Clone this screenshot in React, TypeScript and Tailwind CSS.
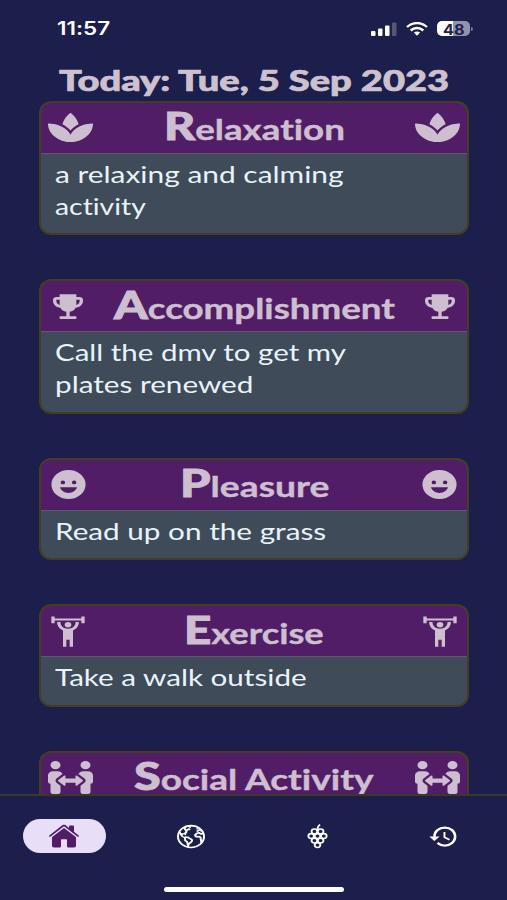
import { useLayoutEffect, useRef } from "react";
import type { ReactNode } from "react";
import { FaPeopleArrows, FaSpa } from "react-icons/fa";
import { IoEarthOutline, IoHome } from "react-icons/io5";
import { MdEmojiEvents, MdHistory } from "react-icons/md";

// Stretches one line of text to a given width
function Line({ width, className = "", children }: { width: number; className?: string; children: ReactNode }) {
  const ref = useRef<HTMLSpanElement>(null);

  useLayoutEffect(() => {
    const el = ref.current;
    if (el) el.style.transform = `scaleX(${width / el.offsetWidth})`;
  }, [width]);

  return (
    <span className="block" style={{ width }}>
      <span ref={ref} className={`inline-block origin-left whitespace-nowrap ${className}`}>
        {children}
      </span>
    </span>
  );
}

const Spa = () => <FaSpa preserveAspectRatio="none" className="h-[33px] w-[45px]" />;
const Trophy = () => <MdEmojiEvents preserveAspectRatio="none" className="h-[33px] w-10" />;
const People = () => <FaPeopleArrows preserveAspectRatio="none" className="h-[33px] w-[45px]" />;

const Smiley = () => (
  <svg viewBox="0 0 24 24" preserveAspectRatio="none" className="h-[35px] w-[41px]" fill="currentColor">
    <path
      fillRule="evenodd"
      d="M12 2a10 10 0 1 0 0 20 10 10 0 0 0 0-20ZM8.700 9.300a1.300 1.300 0 1 1 0 2.600 1.300 1.300 0 0 1 0-2.600Zm6.600 0a1.300 1.300 0 1 1 0 2.600 1.300 1.300 0 0 1 0-2.600ZM7 13.900h10c-.6 2.300-2.600 3.900-5 3.900S7.600 16.200 7 13.900Z"
    />
  </svg>
);

const Lifter = () => (
  <svg viewBox="0 0 24 24" preserveAspectRatio="none" className="h-[33px] w-10" fill="currentColor">
    <circle cx="12" cy="7" r="2" />
    <path d="M22 1v5h-2V4H4v2H2V1h2v1.500h16V1h2ZM15 11.260V23h-2v-5h-2v5H9V11.260C6.930 10.170 5.500 8 5.500 5.500V5h2v.5C7.500 8 9.500 10 12 10s4.500-2 4.500-4.500V5h2v.5c0 2.500-1.430 4.670-3.500 5.760Z" />
  </svg>
);

const Grapes = () => (
  <svg viewBox="0 0 24 24" preserveAspectRatio="none" className="h-[26px] w-[31px]" fill="none" stroke="currentColor" strokeWidth="1.400">
    <path d="M12 6c0-2 .5-3.500 2-4.500" />
    <circle cx="9.600" cy="7.800" r="2.200" />
    <circle cx="14.400" cy="7.800" r="2.200" />
    <circle cx="7.100" cy="12" r="2.200" />
    <circle cx="12" cy="12" r="2.200" />
    <circle cx="16.900" cy="12" r="2.200" />
    <circle cx="9.600" cy="16.200" r="2.200" />
    <circle cx="14.400" cy="16.200" r="2.200" />
    <circle cx="12" cy="20.400" r="2.200" />
  </svg>
);

const cards = [
  {
    title: "Relaxation",
    width: 181,
    icon: Spa,
    lines: [
      { text: "a relaxing and calming", width: 289 },
      { text: "activity", width: 91 },
    ],
  },
  {
    title: "Accomplishment",
    width: 281,
    icon: Trophy,
    lines: [
      { text: "Call the dmv to get my", width: 291 },
      { text: "plates renewed", width: 198 },
    ],
  },
  {
    title: "Pleasure",
    width: 149,
    icon: Smiley,
    lines: [{ text: "Read up on the grass", width: 271 }],
  },
  {
    title: "Exercise",
    width: 140,
    icon: Lifter,
    lines: [{ text: "Take a walk outside", width: 252 }],
  },
  {
    title: "Social Activity",
    width: 240,
    icon: People,
    lines: [],
  },
];

function Card({ title, width, icon: Icon, lines }: (typeof cards)[number]) {
  return (
    <section className="shrink-0 overflow-hidden rounded-xl border-2 border-[#443d21] bg-[#3f4b58]">
      <header className="flex h-[51px] items-center justify-between border-b border-[#67527c] bg-[#501d66] px-[7px] text-[#cdbfd0]">
        <Icon />
        <Line width={width} className="pb-px text-[29px] leading-[49px] font-bold [-webkit-text-stroke:0.4px_#cdbfd0]">
          <span className="text-[38px] font-black [-webkit-text-stroke:0.9px_#cdbfd0]">{title[0]}</span>
          {title.slice(1)}
        </Line>
        <Icon />
      </header>
      <div className="px-3.5 pt-1 pb-[11.5px] text-2xl leading-8 text-[#e8f3fc]">
        {lines.map((line) => (
          <Line key={line.text} width={line.width}>
            {line.text}
          </Line>
        ))}
      </div>
    </section>
  );
}

function StatusBar() {
  return (
    <div className="flex h-[57px] shrink-0 items-center justify-between pr-[34px] pl-[57px] text-white">
      <Line width={53} className="pt-px font-['Inter'] text-[19px] leading-6 font-semibold">
        11:57
      </Line>
      <div className="flex items-center gap-[9px]">
        <svg viewBox="0 0 26 14" className="h-3.5 w-[26px]" fill="currentColor">
          <rect x="0" y="9" width="4.500" height="5" rx="1" />
          <rect x="7" y="6.500" width="4.500" height="7.500" rx="1" />
          <rect x="14" y="3.500" width="4.500" height="10.500" rx="1" />
          <rect x="21" y="0.500" width="4.500" height="13.500" rx="1" opacity="0.250" />
        </svg>
        <svg viewBox="0 0 22 14" className="h-3.5 w-[22px]" fill="none" stroke="currentColor" strokeWidth="2.400">
          <path d="M1 5C6.500-.3 15.500-.3 21 5" />
          <path d="M4.700 8.500c3.600-3.300 9-3.300 12.600 0" />
          <path d="M7.800 10.600c2-1.500 4.400-1.500 6.400 0L11 13.800Z" fill="currentColor" stroke="none" />
        </svg>
        <div className="flex items-center gap-px">
          <div className="flex h-[15px] w-[33px] items-center justify-center rounded-[5px] bg-linear-to-r from-white from-50% to-[#9192ae] to-50% font-['Inter'] text-[#1c1d49]">
            <Line width={22} className="text-sm leading-[15px] font-bold">
              48
            </Line>
          </div>
          <div className="h-1 w-[2px] rounded-r bg-[#77789a]" />
        </div>
      </div>
    </div>
  );
}

export default function App() {
  return (
    <main className="flex h-[900px] w-[507px] flex-col overflow-hidden bg-[#1c1e4b] font-['Lato',sans-serif] [font-variant-ligatures:none]">
      <StatusBar />
      <h1 className="flex h-[43.5px] shrink-0 justify-center text-[#cdc1cf]">
        <Line width={390} className="text-[28px] leading-[47px] font-black [-webkit-text-stroke:0.7px_#cdc1cf]">
          Today: Tue, 5 Sep 2023
        </Line>
      </h1>
      <div className="flex min-h-0 flex-1 flex-col gap-11 overflow-hidden pr-[38px] pl-[39px]">
        {cards.map((card) => (
          <Card key={card.title} {...card} />
        ))}
      </div>
      <nav className="flex h-[106px] shrink-0 flex-col items-center justify-between border-t-2 border-[#3c3826] pb-2 text-white">
        <div className="grid w-full grid-cols-4 pt-[23px] pl-px">
          <span className="flex items-center justify-center">
            <span className="flex h-[34px] w-[83px] items-center justify-center rounded-full bg-[#e8def8] text-[#501d66]">
              <IoHome preserveAspectRatio="none" className="h-[26px] w-8" />
            </span>
          </span>
          <span className="flex items-center justify-center">
            <IoEarthOutline preserveAspectRatio="none" className="h-[27px] w-8" />
          </span>
          <span className="flex items-center justify-center">
            <Grapes />
          </span>
          <span className="flex items-center justify-center">
            <MdHistory preserveAspectRatio="none" className="h-[27px] w-[31px]" />
          </span>
        </div>
        <div className="h-[5px] w-[180px] rounded-full bg-white" />
      </nav>
    </main>
  );
}
